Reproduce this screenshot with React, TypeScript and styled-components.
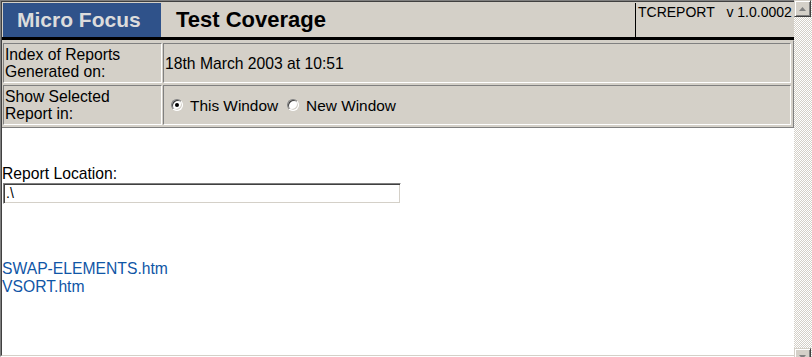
import { FC } from "react";
import styled, { createGlobalStyle } from "styled-components";

const GlobalStyle = createGlobalStyle`
  html, body {
    margin: 0;
    padding: 0;
    background: #fff;
    overflow: hidden;
  }
  body {
    font-family: "Liberation Sans", Arial, sans-serif;
  }
`;

const reports = ["SWAP-ELEMENTS.htm", "VSORT.htm"];

const Arrow: FC<{ down?: boolean }> = ({ down }) => (
  <svg width="9" height="6" viewBox="0 0 9 6">
    <polygon
      points={down ? "1,1 8,1 4.5,5" : "1,5 8,5 4.5,1"}
      fill="#808080"
    />
  </svg>
);

const App: FC = () => {
  return (
    <Screen>
      <GlobalStyle />
      <Frame>
        <Page>
          <Header>
            <Brand>Micro Focus</Brand>
            <Title>Test Coverage</Title>
            <Meta>TCREPORT&nbsp;&nbsp;&nbsp;v 1.0.0002</Meta>
          </Header>

          <InfoTable>
            <Cell>
              Index of Reports
              <br />
              Generated on:
            </Cell>
            <Cell>18th March 2003 at 10:51</Cell>
            <Cell>
              Show Selected
              <br />
              Report in:
            </Cell>
            <Cell $inline>
              <Option>
                <RadioCircle $checked />
                This Window
              </Option>
              <Option>
                <RadioCircle />
                New Window
              </Option>
            </Cell>
          </InfoTable>

          <Content>
            <Label>Report Location:</Label>
            <LocationBox>.\</LocationBox>
            <ReportList>
              {reports.map((r) => (
                <ReportLink key={r} href="#">
                  {r}
                </ReportLink>
              ))}
            </ReportList>
          </Content>
        </Page>
      </Frame>

      <Scrollbar>
        <ScrollButton>
          <Arrow />
        </ScrollButton>
        <Track />
        <ScrollButton>
          <Arrow down />
        </ScrollButton>
      </Scrollbar>
    </Screen>
  );
};

export default App;

const Screen = styled.div`
  display: flex;
  align-items: flex-start;
  width: 812px;
  height: 357px;
  overflow: hidden;
`;

const Frame = styled.div`
  width: 794px;
  height: 357px;
  flex-shrink: 0;
  box-sizing: border-box;
  display: flex;
  flex-direction: column;
  border-style: solid;
  border-width: 1px 0 1px 1px;
  border-color: #808080 transparent #fff #808080;
`;

const Page = styled.div`
  flex: 1;
  overflow: hidden;
  background: #fff;
  border-style: solid;
  border-width: 1px 0 1px 1px;
  border-color: #404040 transparent #d4d0c8 #404040;
`;

const Header = styled.div`
  display: flex;
  height: 34px;
  padding: 1px 0 0 1px;
  background: #d4d0c8;
  border-bottom: 3px solid #000;
`;

const Brand = styled.div`
  width: 144px;
  padding-left: 14px;
  display: flex;
  align-items: center;
  background: #2f528a;
  color: #dcdcdc;
  font-size: 21px;
  font-weight: bold;
`;

const Title = styled.div`
  flex: 1;
  padding-left: 15px;
  display: flex;
  align-items: center;
  color: #000;
  font-size: 22px;
  font-weight: bold;
`;

const Meta = styled.div`
  width: 156px;
  padding: 1px 0 0 2px;
  border-left: 1px solid #000;
  font-size: 14px;
  color: #000;
  white-space: nowrap;
`;

const InfoTable = styled.div`
  display: grid;
  grid-template-columns: 159px 1fr;
  grid-auto-rows: 40px;
  column-gap: 1px;
  row-gap: 2px;
  padding: 2px 2px 2px 1px;
  background: #d4d0c8;
  border-style: solid;
  border-width: 1px 1px 1px 0;
  border-color: #d4d0c8 #808080 #808080 transparent;
`;

const Cell = styled.div<{ $inline?: boolean }>`
  box-sizing: border-box;
  display: flex;
  flex-direction: ${(p) => (p.$inline ? "row" : "column")};
  justify-content: ${(p) => (p.$inline ? "flex-start" : "center")};
  align-items: ${(p) => (p.$inline ? "center" : "stretch")};
  padding: 0 1px;
  border: 1px solid;
  border-color: #808080 #fff #fff #808080;
  font-size: 15.7px;
  line-height: 17px;
  color: #000;
  white-space: nowrap;
`;

const Option = styled.label`
  display: flex;
  align-items: center;
  margin-right: 3px;
  font-size: 15.4px;
`;

const RadioCircle = styled.span<{ $checked?: boolean }>`
  box-sizing: border-box;
  display: inline-flex;
  align-items: center;
  justify-content: center;
  width: 12px;
  height: 12px;
  margin: 0 7px 0 6px;
  border-radius: 50%;
  border: 1px solid;
  border-color: #808080 #fff #fff #808080;
  box-shadow: inset 1px 1px 0 #404040, inset -1px -1px 0 #d4d0c8;
  background: #fff;
  &::after {
    content: "";
    width: 4px;
    height: 4px;
    border-radius: 50%;
    background: ${(p) => (p.$checked ? "#000" : "transparent")};
  }
`;

const Content = styled.div`
  padding-top: 37px;
  font-size: 15.7px;
  line-height: 18px;
`;

const Label = styled.div`
  color: #000;
`;

const LocationBox = styled.div`
  box-sizing: border-box;
  width: 398px;
  height: 21px;
  margin-left: 1px;
  padding: 1px 2px;
  font-size: 14px;
  line-height: 16px;
  color: #000;
  border: 1px solid;
  border-color: #808080 #fff #fff #808080;
  box-shadow: inset 1px 1px 0 #404040, inset -1px -1px 0 #d4d0c8;
`;

const ReportList = styled.div`
  display: flex;
  flex-direction: column;
  align-items: flex-start;
  padding-top: 56px;
`;

const ReportLink = styled.a`
  color: #1056a6;
  text-decoration: none;
`;

const Scrollbar = styled.div`
  width: 18px;
  height: 357px;
  flex-shrink: 0;
  overflow: hidden;
  display: flex;
  flex-direction: column;
  background: repeating-conic-gradient(#d4d0c8 0 25%, #fff 0 50%) 0 0 / 2px 2px;
`;

const ScrollButton = styled.div`
  box-sizing: border-box;
  flex-shrink: 0;
  width: 17px;
  height: 17px;
  display: flex;
  align-items: center;
  justify-content: center;
  background: #d4d0c8;
  border: 1px solid;
  border-color: #d4d0c8 #404040 #404040 #d4d0c8;
  box-shadow: inset 1px 1px 0 #fff, inset -1px -1px 0 #808080;
`;

const Track = styled.div`
  flex: 0 0 331px;
`;
